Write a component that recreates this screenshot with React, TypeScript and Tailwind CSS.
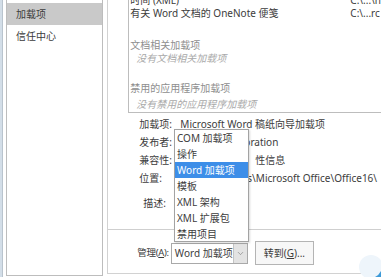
import React from 'react';
import { ChevronDown } from 'lucide-react';

const addinTypes = ['COM 加载项', '操作', 'Word 加载项', '模板', 'XML 架构', 'XML 扩展包', '禁用项目'];

const details = [
  { label: '加载项:', value: 'Microsoft Word 稿纸向导加载项', indent: 'ml-0' },
  { label: '发布者:', value: 'oration', indent: 'ml-[64px]' },
  { label: '兼容性:', value: '性信息', indent: 'ml-[75px]' },
  { label: '位置:', value: 's\\Microsoft Office\\Office16\\', indent: 'ml-[67px]' },
];

const App: React.FC = () => {
  return (
    <div className="relative w-[381px] h-[277px] overflow-hidden bg-white text-[10px] text-[#3c3c3c] font-['Noto_Sans','Noto_Sans_CJK_SC',sans-serif]">
      <div className="flex h-full">
        {/* window edge */}
        <div className="w-[3px] h-full bg-[#d3dee8] border-r border-[#b9c4ce]" />

        {/* category list */}
        <div className="ml-[3px] w-[99px] h-[276px] border-x border-b border-[#bdbdbd] pt-[3px]">
          <div className="h-[22px] bg-[#c9c9c9] pl-[9px] flex items-center">加载项</div>
          <div className="h-[22px] pl-[9px] flex items-center">信任中心</div>
        </div>

        {/* add-ins pane */}
        <div className="ml-[4px] flex-1 h-[274px] border-l border-b border-[#d2d2d2] flex flex-col">
          <div className="ml-[20px] -mt-[6px] border-l border-b border-[#bdbdbd] pl-[1px] pb-[1px] flex flex-col">
            <div className="h-[13px] leading-[13px] flex whitespace-nowrap">
              <span className="w-[220px]">时间 (XML)</span>
              <span>C:\...\h</span>
            </div>
            <div className="h-[13px] leading-[13px] flex whitespace-nowrap">
              <span className="w-[220px]">有关 Word 文档的 OneNote 便笺</span>
              <span>C:\...rc</span>
            </div>
            <div className="mt-[19px] h-[13px] leading-[13px] text-[#8e8e8e]">文档相关加载项</div>
            <div className="h-[13px] leading-[13px] pl-[6px] italic text-[#a9a9a9]">没有文档相关加载项</div>
            <div className="mt-[17px] h-[13px] leading-[13px] text-[#8e8e8e]">禁用的应用程序加载项</div>
            <div className="mt-[3px] h-[13px] leading-[13px] pl-[6px] italic text-[#a9a9a9]">没有禁用的应用程序加载项</div>
          </div>

          <div className="mt-[2px] pl-[31px] flex flex-col">
            {details.map((d) => (
              <div key={d.label} className="h-[18px] flex items-center whitespace-nowrap">
                <span className="w-[41px]">{d.label}</span>
                <span className={d.indent}>{d.value}</span>
              </div>
            ))}
            <div className="mt-[7px] h-[18px] flex items-center pl-[4px]">描述:</div>
          </div>

          <div className="mt-[17px] border-t border-[#cfcfcf]" />

          <div className="mt-[11px] pl-[29px] flex items-center">
            <span className="shrink-0 mr-[2px] whitespace-nowrap text-[9.5px] tracking-[-0.3px]">
              管理(<u>A</u>):
            </span>
            <div className="w-[77px] h-[21px] border border-[#a9a9a9] flex items-center">
              <span className="flex-1 pl-[3px] whitespace-nowrap">Word 加载项</span>
              <div className="w-[14px] h-full bg-[#e3e3e3] border-l border-[#c4c4c4] flex items-center justify-center">
                <ChevronDown className="w-[9px] h-[9px] text-[#707070]" strokeWidth={1.5} />
              </div>
            </div>
            <button className="ml-[7px] w-[59px] h-[24px] border border-[#b4b4b4] bg-[#f7f7f7] flex items-center justify-center whitespace-nowrap">
              转到(<u>G</u>)...
            </button>
          </div>
        </div>
      </div>

      {/* open dropdown list */}
      <div className="absolute left-[174px] top-[129px] w-[75px] h-[113px] bg-white border border-[#a3a3a3] shadow-[1px_1px_2px_rgba(0,0,0,0.15)] flex flex-col">
        {addinTypes.map((t) => (
          <div
            key={t}
            className={
              t === 'Word 加载项'
                ? 'h-[16px] leading-[16px] pl-[2px] whitespace-nowrap bg-[#3d8ee8] text-white'
                : 'h-[16px] leading-[16px] pl-[2px] whitespace-nowrap'
            }
          >
            {t}
          </div>
        ))}
      </div>

      {/* corner watermark */}
      <svg className="absolute right-0 bottom-0" width="26" height="26" viewBox="0 0 26 26">
        <circle cx="16" cy="16" r="12" fill="#eef5fb" />
        <path d="M20 26 Q24 24 26 20 L26 26 Z" fill="#3d9ad8" />
      </svg>
    </div>
  );
};

export default App;
